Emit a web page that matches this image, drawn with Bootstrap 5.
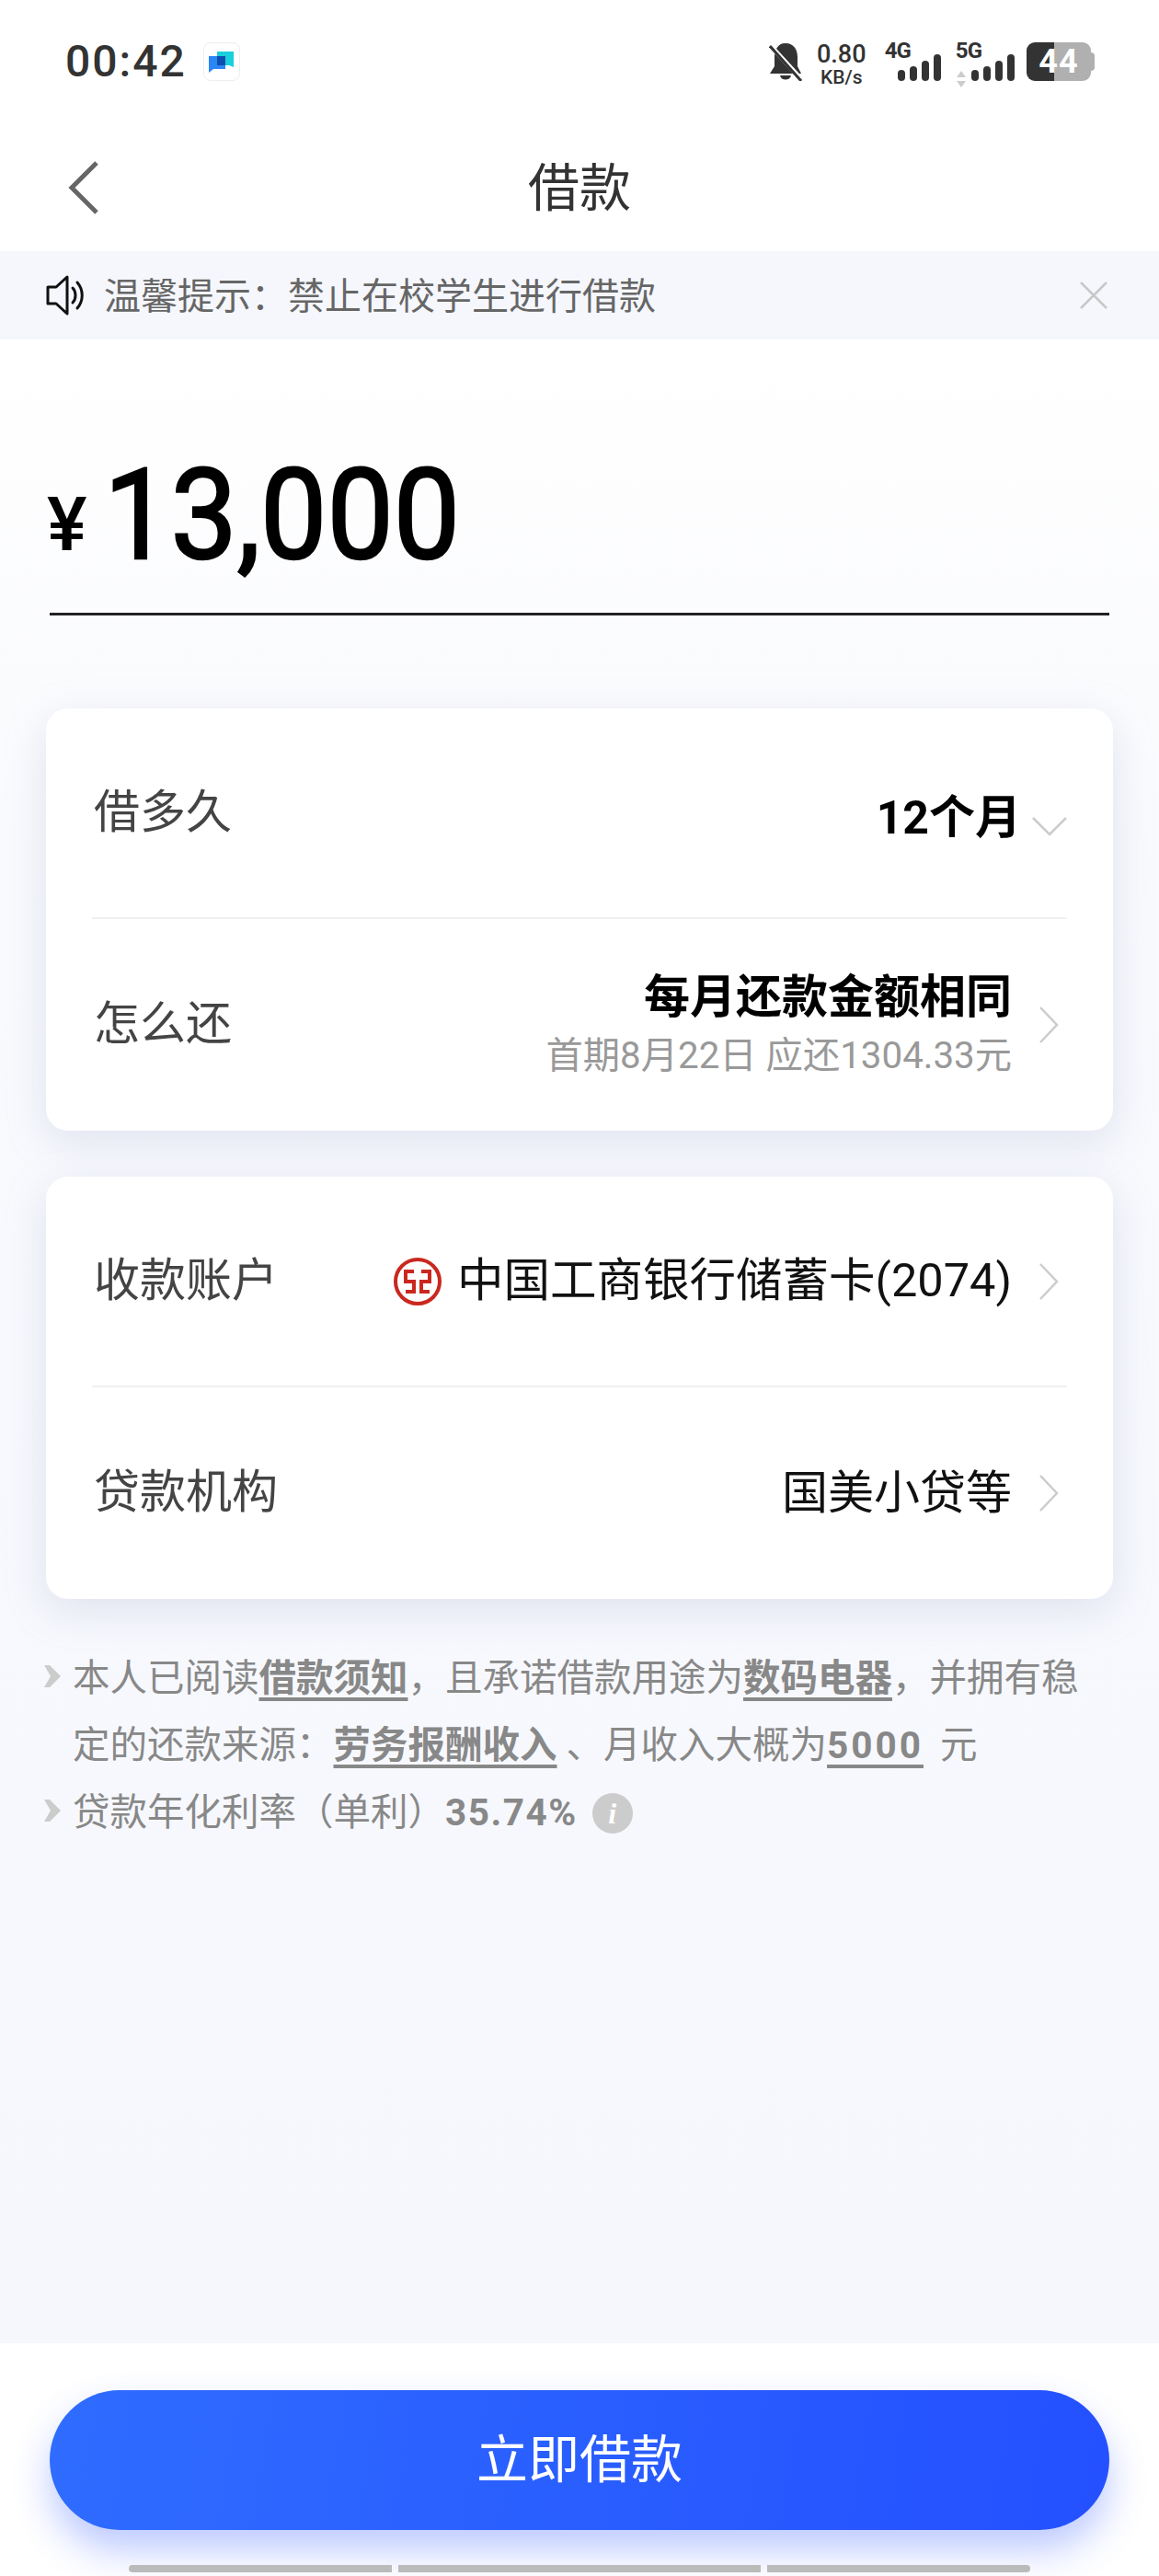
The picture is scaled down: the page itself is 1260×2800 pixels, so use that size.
<!DOCTYPE html>
<html lang="zh-CN">
<head>
    <meta charset="UTF-8">
    <meta name="viewport" content="width=device-width, initial-scale=1.0">
    <title>借款</title>
    <link href="https://cdn.jsdelivr.net/npm/bootstrap@5.3.0/dist/css/bootstrap.min.css" rel="stylesheet">
    <style>
        body { width: 1260px; height: 2800px; overflow: hidden; background: #fff; font-family: Roboto, "Noto Sans CJK SC", sans-serif; }
        .page-wrap { height: 2800px; }
        .status-strip { height: 134px; padding: 46px 70px 0 71px; color: #333; }
        .clock-text { font-size: 48px; line-height: 42px; font-weight: 500; letter-spacing: 2px; }
        .app-tile { width: 40px; height: 42px; margin-left: 18px; border: 1px solid #eee; border-radius: 8px; background: #fff; }
        .speed-box { width: 56px; margin-left: 14px; line-height: 1; text-align: center; font-weight: 500; }
        .speed-num { font-size: 27px; height: 25px; }
        .speed-unit { font-size: 21px; margin-top: 3px; }
        .net-label { font-size: 24px; line-height: 18px; font-weight: 700; letter-spacing: -1px; margin-left: 16px; }
        .net-label.is-4g { margin-left: 19px; }
        .net-arrows { margin-left: -27px; margin-right: 6px; }
        .sig-bars { gap: 5px; height: 42px; }
        .sig-bars.is-4g { margin-left: -14px; }
        .sig-bars span { width: 8px; border-radius: 4px; background: #333; }
        .bar-1 { height: 12px; } .bar-2 { height: 16px; } .bar-3 { height: 22px; } .bar-4 { height: 29px; }
        .batt-box { width: 74px; height: 42px; margin-left: 13px; }
        .batt-dark { width: 30px; background: #333; border-radius: 9px 0 0 9px; }
        .batt-light { width: 40px; background: #b0b0b0; border-radius: 0 9px 9px 0; }
        .batt-nub { width: 4px; height: 20px; background: #b0b0b0; border-radius: 0 4px 4px 0; align-self: center; }
        .batt-num { position: absolute; left: 0; top: 0; width: 70px; line-height: 42px; text-align: center; font-size: 36px; font-weight: 700; color: #fff; letter-spacing: 1px; }
        .title-bar { height: 139px; padding-left: 72px; padding-right: 72px; }
        .title-side { width: 44px; }
        .title-text { font-size: 56px; line-height: 1; color: #333; padding-top: 2px; }
        .tip-bar { height: 96px; background: #f5f7fc; padding: 0 56px 0 50px; color: #666; font-size: 40px; }
        .tip-text { margin-left: 19px; line-height: 1; margin-top: 3px; }
        .loan-body { background: linear-gradient(180deg, #fff 0%, #f9fafd 25%, #f5f7fd 100%); }
        .amount-line { height: 300px; margin: 0 54px; border-bottom: 3px solid #222; padding-top: 127px; color: #000; }
        .amount-sign { font-size: 82px; line-height: 1; font-weight: 500; margin: 33px 0 0 -3px; width: 62px; }
        .amount-num { font-size: 137px; line-height: 1; font-weight: 400; -webkit-text-stroke: 2.5px #000; transform: scaleX(.94); transform-origin: left center; display: inline-block; margin-top: -4px; }
        .form-box { margin: 0 50px 50px; border: 0; border-radius: 24px; box-shadow: 0 12px 44px rgba(160, 170, 205, .28); }
        .form-row { height: 229px; margin: 0 50px; border-bottom: 2px solid #f0f0f2; }
        .form-row:last-child { border-bottom: 0; height: 230px; }
        .form-label { font-size: 50px; color: #444; width: 210px; flex-shrink: 0; line-height: 1; padding: 6px 0 0 2px; }
        .form-value { font-size: 50px; line-height: 1; color: #111; }
        .form-strong { font-weight: 700; color: #000; }
        .form-sub { font-size: 40.3px; line-height: 1; color: #999; margin-top: 19px; }
        .chev-slot { width: 60px; flex-shrink: 0; }
        .chev-right { padding-left: 20px; }
        .chev-down { margin-top: 28px; }
        .term-value { margin-top: 10px; margin-right: -10px; }
        .first-card { margin-top: 101px; }
        .bank-logo { margin-right: 17px; }
        .bank-name { font-size: 50.5px; }
        .notes-area { margin: 9px 60px 0 48px; font-size: 40.5px; line-height: 73px; color: #888; }
        .note-mark { width: 31px; flex-shrink: 0; padding-top: 22px; }
        .note-key { font-weight: 700; text-decoration: underline; text-decoration-thickness: 4px; text-underline-offset: 7px; }
        .note-digits { letter-spacing: 3px; margin-right: 8px; }
        .note-bold { font-weight: 700; letter-spacing: 1.5px; }
        .info-dot { width: 44px; height: 44px; border-radius: 50%; background: #ccc; color: #fff; font-family: "Liberation Serif", serif; font-style: italic; font-weight: 700; font-size: 32px; line-height: 44px; margin-left: 16px; }
        .foot-bar { height: 253px; background: #fff; padding: 51px 54px 0 54px; }
        .go-btn { height: 152px; border: 0; border-radius: 76px; background: linear-gradient(100deg, #2f6cff 0%, #2450ff 100%); color: #fff; font-size: 56px; box-shadow: 0 22px 40px rgba(50, 90, 255, .32); }
        .go-btn:hover { background: linear-gradient(100deg, #2f6cff 0%, #2450ff 100%); color: #fff; }
        .home-bits { gap: 7px; margin: 38px 86px 0 86px; }
        .home-bits span { height: 8px; background: #bbb; }
        .home-a { width: 286px; border-radius: 4px 0 0 4px; }
        .home-b { width: 394px; }
        .home-c { width: 286px; border-radius: 0 4px 4px 0; }
    </style>
</head>
<body>
<div class="page-wrap d-flex flex-column">
    <!-- 状态栏 -->
    <div class="status-strip d-flex align-items-start">
        <span class="clock-text">00:42</span>
        <span class="app-tile d-flex align-items-center justify-content-center">
            <svg width="30" height="26" viewBox="0 0 30 26"><path d="M10 2H28V19L23 17H10Z" fill="#19cfdc"/><path d="M1 7H19V21H6L1 25Z" fill="#2a86f5"/><path d="M10 7H19V17H10Z" fill="#0d4fb0"/></svg>
        </span>
        <span class="ms-auto d-flex">
            <svg width="37" height="42" viewBox="0 0 37 42"><path d="M18 1C9 1 6 9 6 16V26L1 34H35L31 26V16C31 8 27 1 18 1ZM12 36C13 42 23 42 24 36Z" fill="#333"/><path d="M1 3L36 41" stroke="#fff" stroke-width="5"/><path d="M1 4L35 42" stroke="#333" stroke-width="3"/></svg>
            <span class="speed-box"><div class="speed-num">0.80</div><div class="speed-unit">KB/s</div></span>
            <span class="net-label is-4g">4G</span>
            <span class="sig-bars is-4g d-flex align-items-end"><span class="bar-1"></span><span class="bar-2"></span><span class="bar-3"></span><span class="bar-4"></span></span>
            <span class="net-label">5G</span>
            <svg class="net-arrows align-self-end" width="10" height="18" viewBox="0 0 10 18"><path d="M5 0L10 7H0ZM5 18L0 11H10Z" fill="#ccc"/></svg>
            <span class="sig-bars d-flex align-items-end"><span class="bar-1"></span><span class="bar-2"></span><span class="bar-3"></span><span class="bar-4"></span></span>
            <span class="batt-box position-relative d-flex">
                <span class="batt-dark"></span><span class="batt-light"></span><span class="batt-nub"></span>
                <span class="batt-num">44</span>
            </span>
        </span>
    </div>

    <!-- 标题 -->
    <div class="title-bar d-flex align-items-center">
        <div class="title-side">
            <svg width="36" height="60" viewBox="0 0 36 60" class="d-block"><path d="M33 3L6 30L33 57" fill="none" stroke="#666" stroke-width="5"/></svg>
        </div>
        <div class="title-text flex-grow-1 text-center">借款</div>
        <div class="title-side"></div>
    </div>

    <!-- 提示 -->
    <div class="tip-bar d-flex align-items-center">
        <svg width="44" height="44" viewBox="0 0 44 44"><path d="M2 13H11L23 2V42L11 31H2Z" fill="none" stroke="#111" stroke-width="3" stroke-linejoin="round"/><path d="M29 14C33 18 33 26 29 30M34 8C41 16 41 28 34 36" fill="none" stroke="#111" stroke-width="3" stroke-linecap="round"/></svg>
        <span class="tip-text">温馨提示：禁止在校学生进行借款</span>
        <svg class="ms-auto" width="30" height="30" viewBox="0 0 30 30"><path d="M1 1L29 29M29 1L1 29" stroke="#c8c8c8" stroke-width="2.5"/></svg>
    </div>

    <div class="loan-body flex-grow-1">
        <div class="amount-line d-flex align-items-start">
            <span class="amount-sign">¥</span>
            <span class="amount-num">13,000</span>
        </div>

        <div class="card form-box first-card">
            <div class="form-row d-flex align-items-center">
                <div class="form-label">借多久</div>
                <div class="form-value form-strong term-value ms-auto text-end">12个月</div>
                <div class="chev-slot d-flex justify-content-end">
                    <svg width="38" height="22" viewBox="0 0 38 22" class="chev-down"><path d="M1 2L19 20L37 2" fill="none" stroke="#ccc" stroke-width="2.5"/></svg>
                </div>
            </div>
            <div class="form-row d-flex align-items-center">
                <div class="form-label">怎么还</div>
                <div class="ms-auto text-end">
                    <div class="form-value form-strong">每月还款金额相同</div>
                    <div class="form-sub">首期8月22日 应还1304.33元</div>
                </div>
                <div class="chev-slot chev-right d-flex justify-content-center">
                    <svg width="22" height="42" viewBox="0 0 22 42"><path d="M2 2L20 21L2 40" fill="none" stroke="#ccc" stroke-width="2.5"/></svg>
                </div>
            </div>
        </div>

        <div class="card form-box">
            <div class="form-row d-flex align-items-center">
                <div class="form-label">收款账户</div>
                <div class="form-value bank-name ms-auto d-flex align-items-center">
                    <svg class="bank-logo" width="52" height="52" viewBox="0 0 52 52"><circle cx="26" cy="26" r="24" fill="none" stroke="#c9281f" stroke-width="4"/><path d="M22 15H13V26H22V37H13M30 15H39V26H30V37H39" fill="none" stroke="#c9281f" stroke-width="4"/></svg>
                    中国工商银行储蓄卡(2074)
                </div>
                <div class="chev-slot chev-right d-flex justify-content-center">
                    <svg width="22" height="42" viewBox="0 0 22 42"><path d="M2 2L20 21L2 40" fill="none" stroke="#ccc" stroke-width="2.5"/></svg>
                </div>
            </div>
            <div class="form-row d-flex align-items-center">
                <div class="form-label">贷款机构</div>
                <div class="form-value ms-auto">国美小贷等</div>
                <div class="chev-slot chev-right d-flex justify-content-center">
                    <svg width="22" height="42" viewBox="0 0 22 42"><path d="M2 2L20 21L2 40" fill="none" stroke="#ccc" stroke-width="2.5"/></svg>
                </div>
            </div>
        </div>

        <div class="notes-area">
            <div class="d-flex">
                <div class="note-mark"><svg width="18" height="24" viewBox="0 0 18 24" class="d-block"><path d="M0 0H6L18 12L6 24H0L7 12Z" fill="#ccc"/></svg></div>
                <div>本人已阅读<span class="note-key">借款须知</span>，且承诺借款用途为<span class="note-key">数码电器</span>，并拥有稳定的还款来源：<span class="note-key">劳务报酬收入</span> 、月收入大概为<span class="note-key note-digits">5000</span> 元</div>
            </div>
            <div class="d-flex">
                <div class="note-mark"><svg width="18" height="24" viewBox="0 0 18 24" class="d-block"><path d="M0 0H6L18 12L6 24H0L7 12Z" fill="#ccc"/></svg></div>
                <div class="d-flex align-items-center">贷款年化利率（单利）<span class="note-bold">35.74%</span><span class="info-dot text-center">i</span></div>
            </div>
        </div>
    </div>

    <!-- 底部按钮 -->
    <div class="foot-bar">
        <button class="btn go-btn w-100 d-block">立即借款</button>
        <div class="home-bits d-flex"><span class="home-a"></span><span class="home-b"></span><span class="home-c"></span></div>
    </div>
</div>
<script src="https://cdn.jsdelivr.net/npm/bootstrap@5.3.0/dist/js/bootstrap.bundle.min.js"></script>
</body>
</html>
